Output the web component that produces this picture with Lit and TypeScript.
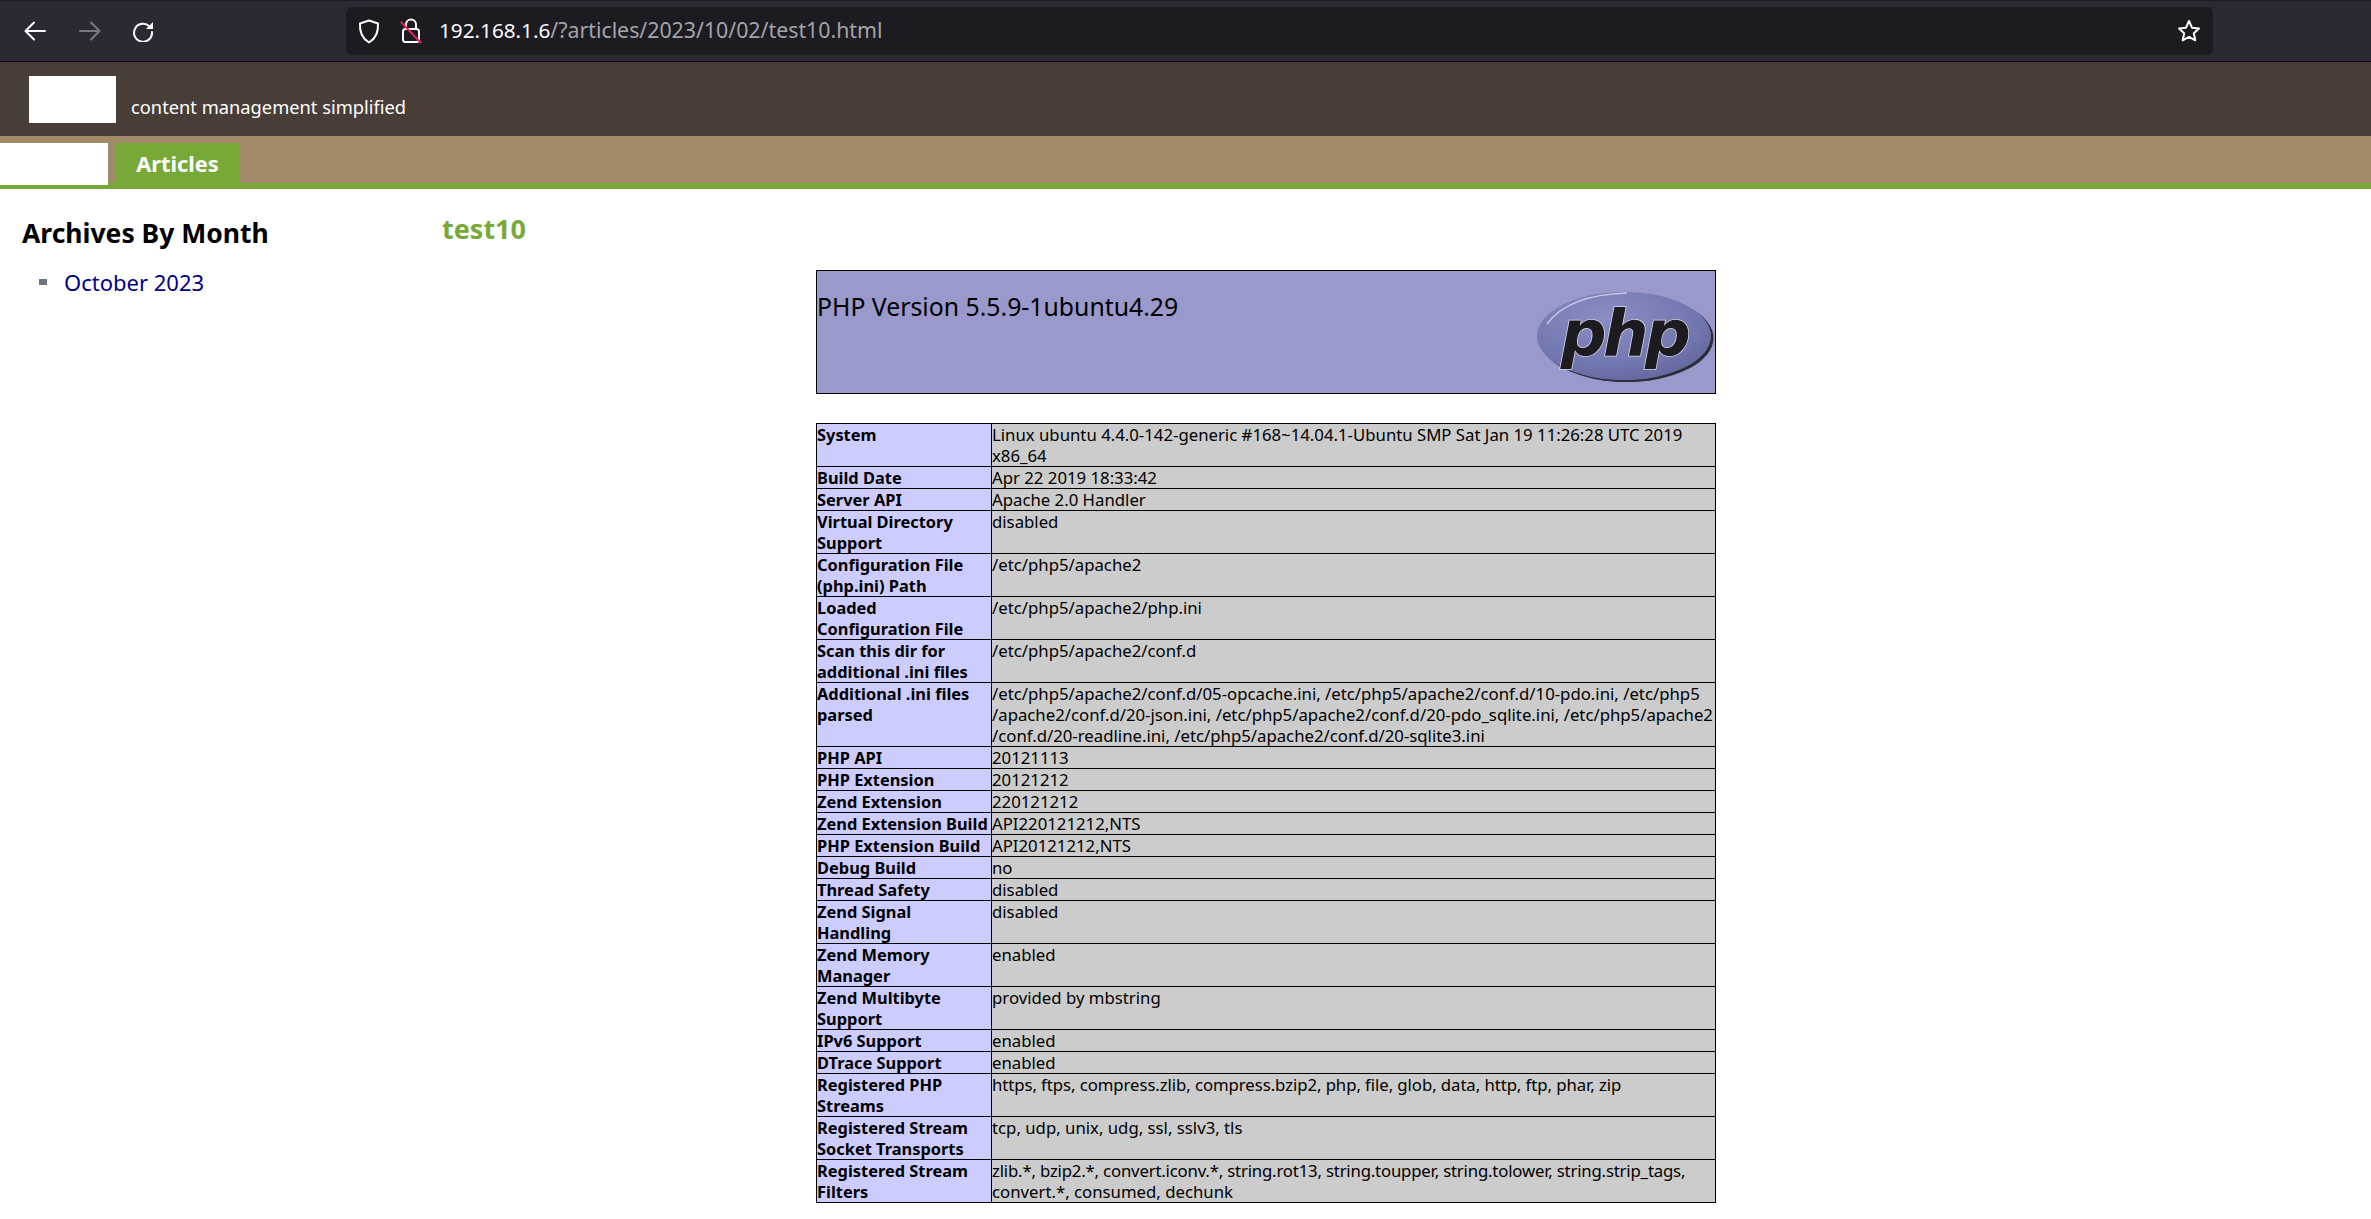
import { LitElement, html, css, svg } from "lit";
import { customElement } from "lit/decorators.js";

type Row = [unknown, unknown];
const rows: Row[] = [
  ["System", html`Linux ubuntu 4.4.0-142-generic #168~14.04.1-Ubuntu SMP Sat Jan 19 11:26:28 UTC 2019<br />x86_64`],
  ["Build Date", "Apr 22 2019 18:33:42"],
  ["Server API", "Apache 2.0 Handler"],
  [html`Virtual Directory<br />Support`, "disabled"],
  [html`Configuration File<br />(php.ini) Path`, "/etc/php5/apache2"],
  [html`Loaded<br />Configuration File`, "/etc/php5/apache2/php.ini"],
  [html`Scan this dir for<br />additional .ini files`, "/etc/php5/apache2/conf.d"],
  [html`Additional .ini files<br />parsed`, html`/etc/php5/apache2/conf.d/05-opcache.ini, /etc/php5/apache2/conf.d/10-pdo.ini, /etc/php5<br />/apache2/conf.d/20-json.ini, /etc/php5/apache2/conf.d/20-pdo_sqlite.ini, /etc/php5/apache2<br />/conf.d/20-readline.ini, /etc/php5/apache2/conf.d/20-sqlite3.ini`],
  ["PHP API", "20121113"],
  ["PHP Extension", "20121212"],
  ["Zend Extension", "220121212"],
  ["Zend Extension Build", "API220121212,NTS"],
  ["PHP Extension Build", "API20121212,NTS"],
  ["Debug Build", "no"],
  ["Thread Safety", "disabled"],
  [html`Zend Signal<br />Handling`, "disabled"],
  [html`Zend Memory<br />Manager`, "enabled"],
  [html`Zend Multibyte<br />Support`, "provided by mbstring"],
  ["IPv6 Support", "enabled"],
  ["DTrace Support", "enabled"],
  [html`Registered PHP<br />Streams`, html`<span class="tight-s">https, ftps, compress.zlib, compress.bzip2, php, file, glob, data, http, ftp, phar, zip</span>`],
  [html`Registered Stream<br />Socket Transports`, "tcp, udp, unix, udg, ssl, sslv3, tls"],
  [html`Registered Stream<br />Filters`, html`<span class="tight">zlib.*, bzip2.*, convert.iconv.*, string.rot13, string.toupper, string.tolower, string.strip_tags,</span><br />convert.*, consumed, dechunk`],
];

const icons = {
  back: svg`<path d="M21 10H2M10 1.5 1.5 10 10 18.500" fill="none" stroke="currentColor" stroke-width="2" stroke-linecap="round" stroke-linejoin="round"/>`,
  reload: svg`<path d="M17.500 6.500A9 9 0 1 0 20 12" fill="none" stroke="currentColor" stroke-width="2" stroke-linecap="round"/><path d="M21 2v7h-7z" fill="currentColor"/>`,
  shield: svg`<path d="M11 1.500 20 4.500C20.500 13 18 19.500 11 23.500 4 19.500 1.500 13 2 4.500Z" fill="none" stroke="currentColor" stroke-width="2" stroke-linejoin="round"/>`,
  star: svg`<path d="M12 2 15 8.700 22 9.500 16.800 14.300 18.300 21.300 12 17.800 5.700 21.300 7.200 14.300 2 9.500 9 8.700Z" fill="none" stroke="currentColor" stroke-width="2" stroke-linejoin="round"/>`,
};

@customElement("app-root")
export class AppRoot extends LitElement {
  static styles = css`
    :host { display: block; font-family: "Noto Sans", "Open Sans", sans-serif; color: #000; background: #fff; min-height: 1219px; overflow: hidden; }
    .toolbar { background: #2b2a33; border-top: 1px solid #1c1b22; border-bottom: 1px solid #0c0c0d; height: 60px; display: flex; align-items: center; color: #fbfbfe; padding-left: 24px; padding-right: 158px; }
    .navbtn { display: block; flex: none; }
    .fwd { margin-left: 33px; color: #7a7980; }
    .rel { margin-left: 31px; margin-right: 192px; }
    .url { flex: 1; height: 48px; background: #1c1b22; border-radius: 6px; display: flex; align-items: center; padding-left: 12px; padding-right: 12px; }
    .lock { margin-left: 20px; margin-right: 17px; }
    .host { font-size: 20.700px; color: #fbfbfe; line-height: 26px; margin-top: -2px; }
    .path { font-size: 21.300px; color: #a4a4a8; line-height: 26px; margin-top: -2px; }
    .star { margin-left: auto; }
    .brand { height: 74px; background: #493d38; display: flex; color: #fff; padding-left: 29px; }
    .logo { width: 87px; height: 47px; margin-top: 14px; background: #fff; }
    .tag { font-size: 18.300px; margin: 32px 0 0 15px; line-height: 26px; }
    .nav { height: 53px; box-sizing: border-box; background: #a08a67; border-bottom: 6px solid #78a838; display: flex; align-items: flex-end; padding-top: 7px; }
    .home { width: 108px; height: 42px; background: #fff; margin-bottom: -2px; }
    .tab { width: 125px; height: 40px; margin-left: 7px; background: #78a838; color: #fff; font-weight: 700; font-size: 21.800px; line-height: 42px; text-align: center; }
    .main { display: flex; }
    aside { width: 442px; flex: none; box-sizing: border-box; padding: 26px 0 0 22px; }
    h2 { margin: 0; font-size: 26.500px; line-height: 36px; font-weight: 700; }
    ul { margin: 16px 0 0; padding: 0 0 0 17px; list-style: none; font-size: 22px; line-height: 30px; }
    li { display: flex; align-items: center; }
    li::before { content: ""; width: 8px; height: 6px; margin-right: 17px; background: #6b7780; }
    a { color: #00008b; text-decoration: none; }
    article { width: 1648px; flex: none; }
    h1 { margin: 22px 0 0; font-size: 27px; line-height: 36px; font-weight: 700; color: #78a838; }
    .info { width: 900px; margin: 23px auto 0; }
    .head { box-sizing: border-box; height: 124px; border: 1px solid #000; background: #9999cc; display: flex; justify-content: space-between; }
    .head h3 { margin: 18px 0 0; font-size: 24.800px; line-height: 34px; font-weight: 400; }
    .php { display: block; margin: 19px 0 0; }
    table { width: 900px; margin-top: 29px; border-collapse: collapse; table-layout: fixed; line-height: 21px; }
    th, td { border: 1px solid #000; padding: 0; vertical-align: top; text-align: left; white-space: nowrap; overflow: visible; }
    th { width: 174px; background: #ccccff; font-weight: 700; font-size: 16.400px; }
    td { background: #cccccc; font-size: 16.750px; }
    .tight { letter-spacing: -0.180px; }
    .tight-s { letter-spacing: -0.070px; }
  `;

  icon(body: unknown, w: number, h: number, vb: string, cls: string) {
    return html`<svg class=${cls} width=${w} height=${h} viewBox=${vb}>${body}</svg>`;
  }

  render() {
    return html`
      <div class="toolbar">
        ${this.icon(icons.back, 22, 20, "0 0 22 20", "navbtn")}
        <svg class="navbtn fwd" width="22" height="20" viewBox="0 0 22 20"><g transform="matrix(-1 0 0 1 22 0)">${icons.back}</g></svg>
        ${this.icon(icons.reload, 22, 22, "0 0 22 22", "navbtn rel")}
        <div class="url">
          ${this.icon(icons.shield, 22, 25, "0 0 22 25", "navbtn")}
          <svg class="navbtn lock" width="22" height="26" viewBox="0 0 22 26">
            <path d="M6 11V6.500a5 5 0 0 1 10 0V11" fill="none" stroke="#fbfbfe" stroke-width="2"/>
            <rect x="3" y="11" width="16" height="13" rx="2.500" fill="none" stroke="#fbfbfe" stroke-width="2"/>
            <path d="M1 4 21 25" stroke="#e22850" stroke-width="2"/>
          </svg>
          <span class="host">192.168.1.6</span><span class="path">/?articles/2023/10/02/test10.html</span>
          ${this.icon(icons.star, 24, 24, "0 0 24 24", "navbtn star")}
        </div>
      </div>
      <div class="brand"><div class="logo"></div><div class="tag">content management simplified</div></div>
      <div class="nav"><div class="home"></div><div class="tab">Articles</div></div>
      <div class="main">
        <aside>
          <h2>Archives By Month</h2>
          <ul><li><a>October 2023</a></li></ul>
        </aside>
        <article>
          <h1>test10</h1>
          <div class="info">
            <div class="head">
              <h3>PHP Version 5.5.9-1ubuntu4.29</h3>
              <svg class="php" width="180" height="93" viewBox="0 0 180 93">
                <defs>
                  <radialGradient id="g" cx="0.4" cy="0.3" r="0.8">
                    <stop offset="0" stop-color="#8a8ec4" />
                    <stop offset="0.7" stop-color="#6f75ad" />
                    <stop offset="1" stop-color="#5e6398" />
                  </radialGradient>
                </defs>
                <ellipse cx="90" cy="47" rx="87" ry="44" fill="#2c2c3a" transform="translate(1.500 1)" />
                <ellipse cx="89" cy="46" rx="87" ry="44" fill="url(#g)" />
                <path d="M12 34C28 12 60 4 92 3" fill="none" stroke="#c4c6e2" stroke-width="1.500" />
                <text x="89" y="66" text-anchor="middle" font-family="'DejaVu Sans', sans-serif" font-weight="700" font-style="italic" font-size="64" letter-spacing="-3.500" fill="#1b1b20" stroke="#d8d9e8" stroke-width="1.500" paint-order="stroke">php</text>
              </svg>
            </div>
            <table>
              ${rows.map(([k, v]) => html`<tr><th>${k}</th><td>${v}</td></tr>`)}
            </table>
          </div>
        </article>
      </div>
    `;
  }
}
